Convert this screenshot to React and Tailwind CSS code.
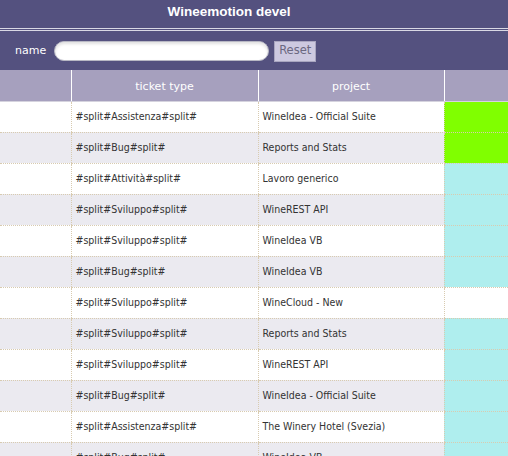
const rows = [
  ["#split#Assistenza#split#", "WineIdea - Official Suite", "green"],
  ["#split#Bug#split#", "Reports and Stats", "green"],
  ["#split#Attività#split#", "Lavoro generico", "cyan"],
  ["#split#Sviluppo#split#", "WineREST API", "cyan"],
  ["#split#Sviluppo#split#", "WineIdea VB", "cyan"],
  ["#split#Bug#split#", "WineIdea VB", "cyan"],
  ["#split#Sviluppo#split#", "WineCloud - New", "none"],
  ["#split#Sviluppo#split#", "Reports and Stats", "cyan"],
  ["#split#Sviluppo#split#", "WineREST API", "cyan"],
  ["#split#Bug#split#", "WineIdea - Official Suite", "cyan"],
  ["#split#Assistenza#split#", "The Winery Hotel (Svezia)", "cyan"],
  ["#split#Bug#split#", "WineIdea VB", "cyan"],
];

const statusClass = {
  green: "bg-[#80ff00]",
  cyan: "bg-[#afeeee]",
  none: "bg-white",
};

const cell =
  "h-[31px] border-b border-l border-dotted border-[#d8cbb0] px-[4px] align-middle";

export default function App() {
  return (
    <div className="w-[508px] h-[456px] overflow-hidden bg-white font-['DejaVu_Sans',sans-serif]">
      <div className="h-[28px] bg-[#54517f] flex items-center">
        <h1 className="w-[458px] text-center text-white font-bold text-[13.5px] font-['Liberation_Sans',Arial,sans-serif] leading-none pb-[4px]">
          Wineemotion devel
        </h1>
      </div>
      <div className="bg-[#54517f] border-t border-b border-[#d9d8e4] h-[3px]" />
      <div className="h-[39px] bg-[#54517f] flex items-center pl-[15px] pt-[1px]">
        <label className="text-white text-[11px] mr-[8px]">name</label>
        <input
          type="text"
          className="w-[215px] h-[20px] rounded-full border border-[#b8b8c4] bg-white shadow-[inset_0_2px_3px_rgba(0,0,0,0.12)] outline-none"
        />
        <button className="ml-[5px] w-[42px] h-[21px] bg-[#cdc9e0] border border-[#a9a6c0] text-[#6b6880] text-[11.5px] font-['DejaVu_Sans',sans-serif]">
          Reset
        </button>
      </div>
      <table className="table-fixed border-collapse w-[560px]">
        <colgroup>
          <col className="w-[71px]" />
          <col className="w-[187px]" />
          <col className="w-[186px]" />
          <col className="w-[116px]" />
        </colgroup>
        <thead>
          <tr className="bg-[#a6a0be] text-white text-[11px] font-normal">
            <th className="h-[31px] border-b border-[#d5d3de] font-normal pt-[3px]"></th>
            <th className="border-l border-b border-white border-b-[#d5d3de] font-normal pt-[3px]">ticket type</th>
            <th className="border-l border-b border-white border-b-[#d5d3de] font-normal pt-[3px]">project</th>
            <th className="border-l border-b border-white border-b-[#d5d3de] font-normal pt-[3px]"></th>
          </tr>
        </thead>
        <tbody className="text-[#333] text-[10.5px] font-['DejaVu_Sans_Condensed','DejaVu_Sans',sans-serif]">
          {rows.map(([type, project, status], i) => (
            <tr key={i} className={i % 2 === 0 ? "bg-white" : "bg-[#ebeaf0]"}>
              <td className="h-[31px] border-b border-dotted border-[#d8cbb0]"></td>
              <td className={cell}>{type}</td>
              <td className={cell}>{project}</td>
              <td className={`${cell} ${statusClass[status]}`}></td>
            </tr>
          ))}
        </tbody>
      </table>
    </div>
  );
}
